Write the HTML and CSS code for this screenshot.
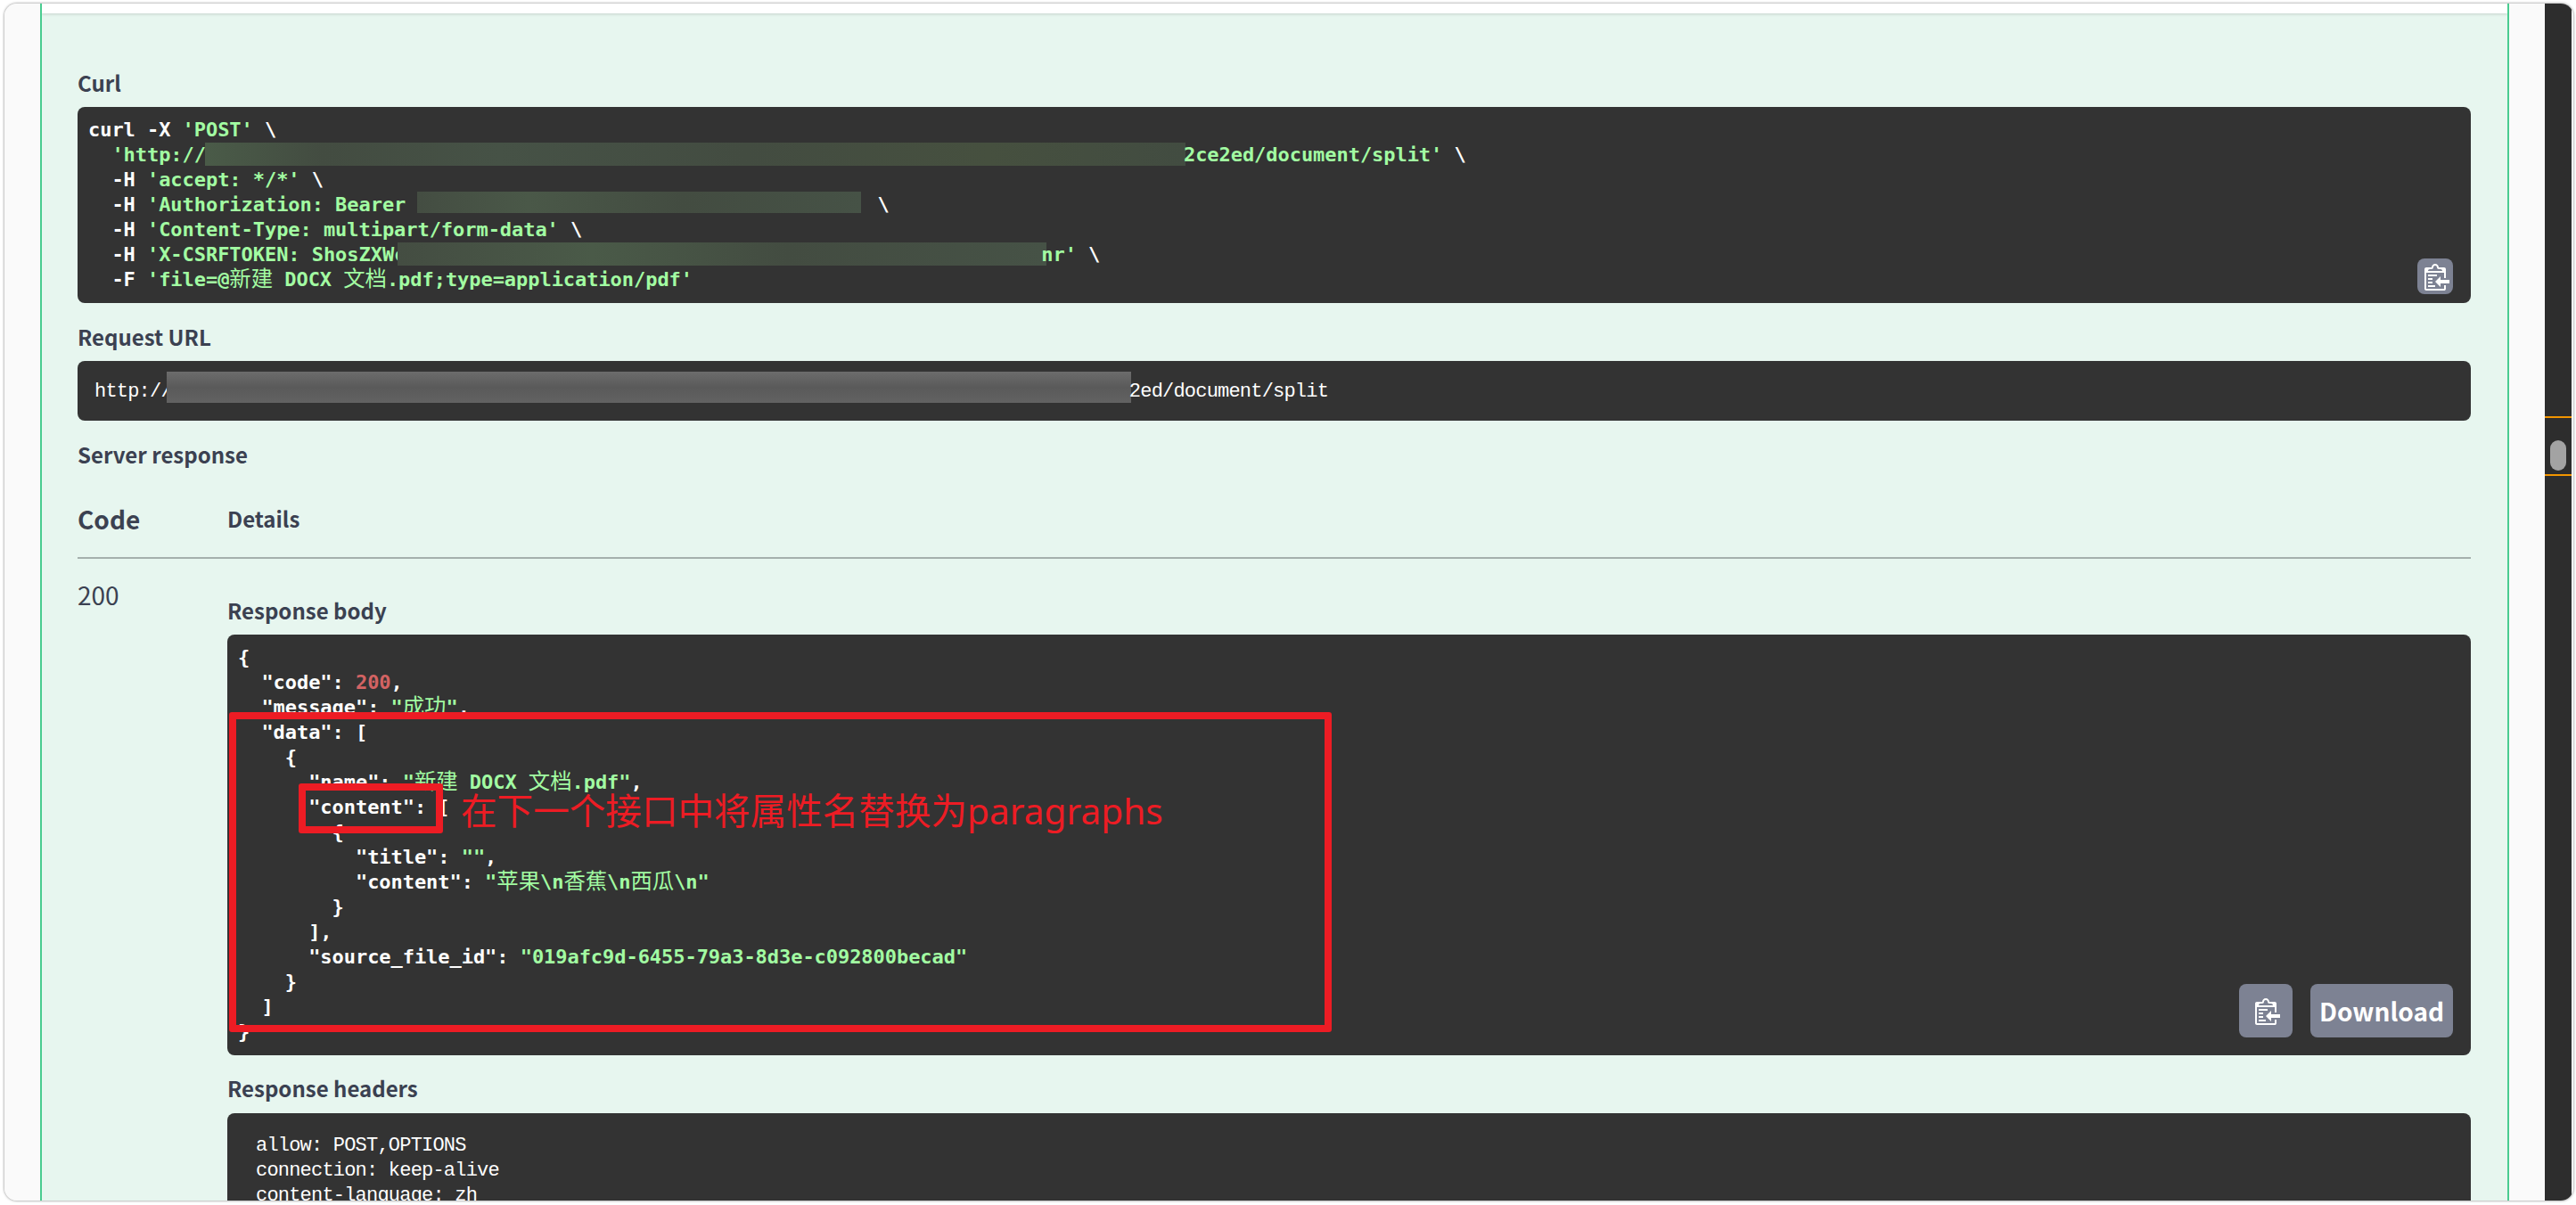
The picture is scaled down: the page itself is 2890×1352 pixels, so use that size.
FILE: index.html
```html
<!DOCTYPE html>
<html lang="zh">
<head>
<meta charset="utf-8">
<title>Swagger response</title>
<link rel="stylesheet" href="styles.css">
</head>
<body>
<div class="window">
  <div class="gutter"></div>
  <main class="op">
    <div class="op-strip"></div>
    <div class="op-body">
      <h4 class="label label-first">Curl</h4>
      <div class="code-box">
<pre class="code"><span class="w">curl -X</span> <span class="g">'POST'</span> <span class="w">\</span>
  <span class="g">'http://<span class="blur blur-url"></span>2ce2ed/document/split'</span> <span class="w">\</span>
  <span class="w">-H</span> <span class="g">'accept: */*'</span> <span class="w">\</span>
  <span class="w">-H</span> <span class="g">'Authorization: Bearer <span class="blur blur-auth"></span></span><span class="w">\</span>
  <span class="w">-H</span> <span class="g">'Content-Type: multipart/form-data'</span> <span class="w">\</span>
  <span class="w">-H</span> <span class="g">'X-CSRFTOKEN: ShosZXWc<span class="blur blur-csrf"></span>nr'</span> <span class="w">\</span>
  <span class="w">-F</span> <span class="g">'file=@<span class="cjk">新建</span> DOCX <span class="cjk">文档</span>.pdf;type=application/pdf'</span></pre>
        <button class="btn btn-small btn-corner" type="button" aria-label="Copy">
          <svg class="clip" viewBox="0 0 16 16" aria-hidden="true"><path fill-rule="evenodd" d="M2 13h4v1H2v-1zm5-6H2v1h5V7zm2 3V8l-3 3 3 3v-2h5v-2H9zM4.5 9H2v1h2.5V9zM2 12h2.5v-1H2v1zm9 1h1v2c-.02.28-.11.52-.3.7-.19.18-.42.28-.7.3H1c-.55 0-1-.45-1-1V4c0-.55.45-1 1-1h3c0-1.11.89-2 2-2 1.11 0 2 .89 2 2h3c.55 0 1 .45 1 1v5h-1V6H1v9h10v-2zM2 5h8c0-.55-.45-1-1-1H8c-.55 0-1-.45-1-1s-.45-1-1-1-1 .45-1 1-.45 1-1 1H3c-.55 0-1 .45-1 1z"/></svg>
        </button>
      </div>

      <h4 class="label label-url">Request URL</h4>
      <div class="code-box url-box">
<pre class="plain">http://<span class="blur blur-req"></span>2ed/document/split</pre>
      </div>

      <h4 class="label label-server">Server response</h4>
      <div class="resp-head">
        <div class="col-code">Code</div>
        <div class="col-details">Details</div>
      </div>
      <div class="resp-row">
        <div class="status">200</div>
        <div class="details">
          <h5 class="label label-body">Response body</h5>
          <div class="code-box body-box">
<pre class="code"><span class="w">{
  "code":</span> <span class="num">200</span><span class="w">,
  "message":</span> <span class="g">"<span class="cjk">成功</span>"</span><span class="w">,
  "data": [
    {
      "name":</span> <span class="g">"<span class="cjk">新建</span> DOCX <span class="cjk">文档</span>.pdf"</span><span class="w">,
      "content": [
        {
          "title":</span> <span class="g">""</span><span class="w">,
          "content":</span> <span class="g">"<span class="cjk">苹果</span>\n<span class="cjk">香蕉</span>\n<span class="cjk">西瓜</span>\n"</span><span class="w">
        }
      ],
      "source_file_id":</span> <span class="g">"019afc9d-6455-79a3-8d3e-c092800becad"</span><span class="w">
    }
  ]
}</span></pre>
            <div class="actions">
              <button class="btn btn-icon" type="button" aria-label="Copy">
                <svg class="clip" viewBox="0 0 16 16" aria-hidden="true"><path fill-rule="evenodd" d="M2 13h4v1H2v-1zm5-6H2v1h5V7zm2 3V8l-3 3 3 3v-2h5v-2H9zM4.5 9H2v1h2.5V9zM2 12h2.5v-1H2v1zm9 1h1v2c-.02.28-.11.52-.3.7-.19.18-.42.28-.7.3H1c-.55 0-1-.45-1-1V4c0-.55.45-1 1-1h3c0-1.11.89-2 2-2 1.11 0 2 .89 2 2h3c.55 0 1 .45 1 1v5h-1V6H1v9h10v-2zM2 5h8c0-.55-.45-1-1-1H8c-.55 0-1-.45-1-1s-.45-1-1-1-1 .45-1 1-.45 1-1 1H3c-.55 0-1 .45-1 1z"/></svg>
              </button>
              <button class="btn btn-download" type="button">Download</button>
            </div>
            <div class="mark mark-big"></div>
            <div class="mark mark-small"></div>
            <div class="note">在下一个接口中将属性名替换为paragraphs</div>
          </div>
          <h5 class="label label-headers">Response headers</h5>
          <div class="code-box headers-box">
<pre class="plain plain-list">allow: POST,OPTIONS
connection: keep-alive
content-language: zh</pre>
          </div>
        </div>
      </div>
    </div>
  </main>
  <div class="gutter gutter-right"></div>
  <aside class="scrollbar">
    <div class="tick tick-a"></div>
    <div class="thumb"></div>
    <div class="tick tick-b"></div>
  </aside>
</div>
</body>
</html>
```
FILE: styles.css
```css
* { box-sizing: border-box; }
html, body { margin: 0; padding: 0; height: 1352px; overflow: hidden; background: #fff; }
body { padding: 4px 3px 5px 5px; font-family: "Noto Sans CJK SC", "Noto Sans", sans-serif; color: #3b4151; }

.window {
  display: flex;
  width: 2882px;
  height: 1343px;
  border-radius: 14px;
  overflow: hidden;
  box-shadow: 0 0 3px rgba(0, 0, 0, .55);
  background: #fafafa;
}
.gutter { width: 40px; flex: none; background: #fafafa; }
.op {
  width: 2770px;
  flex: none;
  border-left: 2px solid #49cc90;
  border-right: 2px solid #49cc90;
  background: #e7f6ef;
  overflow: hidden;
}
.gutter-right { width: 40px; }
.scrollbar { position: relative; width: 30px; flex: none; background: #2d2d2d; }
.thumb { position: absolute; left: 6px; top: 490px; width: 18px; height: 34px; border-radius: 9px; background: #a3a3a3; }
.tick { position: absolute; left: 0; right: 0; height: 2px; background: #f29500; }
.tick-a { top: 463px; }
.tick-b { top: 528px; }

.op-strip { height: 11px; background: #fff; box-shadow: 0 1px 3px rgba(0, 0, 0, .15); }
.op-body { padding: 0 41px 0 40px; }

.label { margin: 0; font-size: 24px; line-height: 34px; font-weight: 700; color: #3b4151; }
.label-first { padding-top: 61px; margin-bottom: 10px; }
.label-url { margin-top: 21px; margin-bottom: 10px; }
.label-server { margin-top: 21px; }
.label-body { margin-top: 41px; margin-bottom: 10px; }
.label-headers { margin-top: 20px; margin-bottom: 11px; }

.code-box { position: relative; background: #333; border-radius: 8px; }
.code {
  margin: 0;
  padding: 12px;
  font-family: "DejaVu Sans Mono", monospace;
  font-size: 22px;
  letter-spacing: -.05px;
  line-height: 28px;
  font-weight: 700;
  white-space: pre;
  color: #fff;
}
.w { color: #fff; }
.g { color: #a2fca2; }
.num { color: #d36363; }
.cjk { font-family: "Noto Sans CJK SC", sans-serif; font-weight: 400; font-size: 24.4px; line-height: 0; }

.plain {
  margin: 0;
  font-family: "Liberation Mono", monospace;
  font-size: 22px;
  letter-spacing: -.8px;
  line-height: 28px;
  font-weight: 400;
  color: #fff;
  white-space: pre;
}
.url-box { height: 67px; padding: 21px 19px; }
.headers-box { padding: 23px 32px; height: 200px; }

.blur { display: inline-block; vertical-align: top; }
.blur-url {
  width: 1100px; height: 26px; margin: 0 -2px 0 -1px;
  background: linear-gradient(90deg, #4a5b48 0, #434c41 12%, #465246 30%, #434c41 55%, #46503f 80%, #424c41 100%);
}
.blur-auth {
  width: 498px; height: 24px; margin: -1px 18px 0 0;
  background: linear-gradient(90deg, #444d42 0, #4a5848 25%, #434c41 60%, #465246 100%);
}
.blur-csrf {
  width: 728px; height: 26px; margin: 0 -6px 0 -9px;
  background: linear-gradient(90deg, #444d42 0, #4a5a48 30%, #434c41 60%, #465246 100%);
}
.blur-req {
  width: 1082px; height: 35px; margin: -9px -2px 0 -6px;
  background: linear-gradient(180deg, #6c6c6c, #5a5a5a 50%, #626262);
}

.resp-head { display: flex; align-items: center; height: 89px; margin-top: 11px; border-bottom: 2px solid #a5b0ad; }
.col-code { width: 168px; font-size: 28px; font-weight: 700; }
.col-details { font-size: 24px; font-weight: 700; }
.resp-row { display: flex; }
.status { width: 168px; flex: none; padding-top: 20px; font-size: 28px; line-height: 40px; font-weight: 400; }
.details { flex: 1; min-width: 0; }

.btn { display: flex; align-items: center; justify-content: center; padding: 0; border: 0; border-radius: 8px; background: #7d8293; color: #fff; }
.clip { width: 32px; height: 32px; fill: #fff; }
.btn-small { width: 40px; height: 40px; padding-left: 8px; }
.btn-corner { position: absolute; right: 20px; bottom: 10px; }
.actions { position: absolute; right: 20px; bottom: 20px; display: flex; gap: 20px; }
.btn-icon { width: 60px; height: 60px; padding-left: 8px; }
.btn-download { width: 160px; height: 60px; font-family: "Noto Sans CJK SC", sans-serif; font-size: 28px; font-weight: 700; }

.mark { position: absolute; border: 8px solid #ed1c24; border-radius: 3px; }
.mark-big { left: 2px; top: 87px; width: 1237px; height: 359px; }
.mark-small { left: 80px; top: 167px; width: 162px; height: 56px; }
.note {
  position: absolute;
  left: 262px;
  top: 170px;
  font-family: "Noto Sans", "Noto Sans CJK SC", sans-serif;
  font-size: 40.6px;
  line-height: 56px;
  color: #ed1c24;
  white-space: nowrap;
}
```
